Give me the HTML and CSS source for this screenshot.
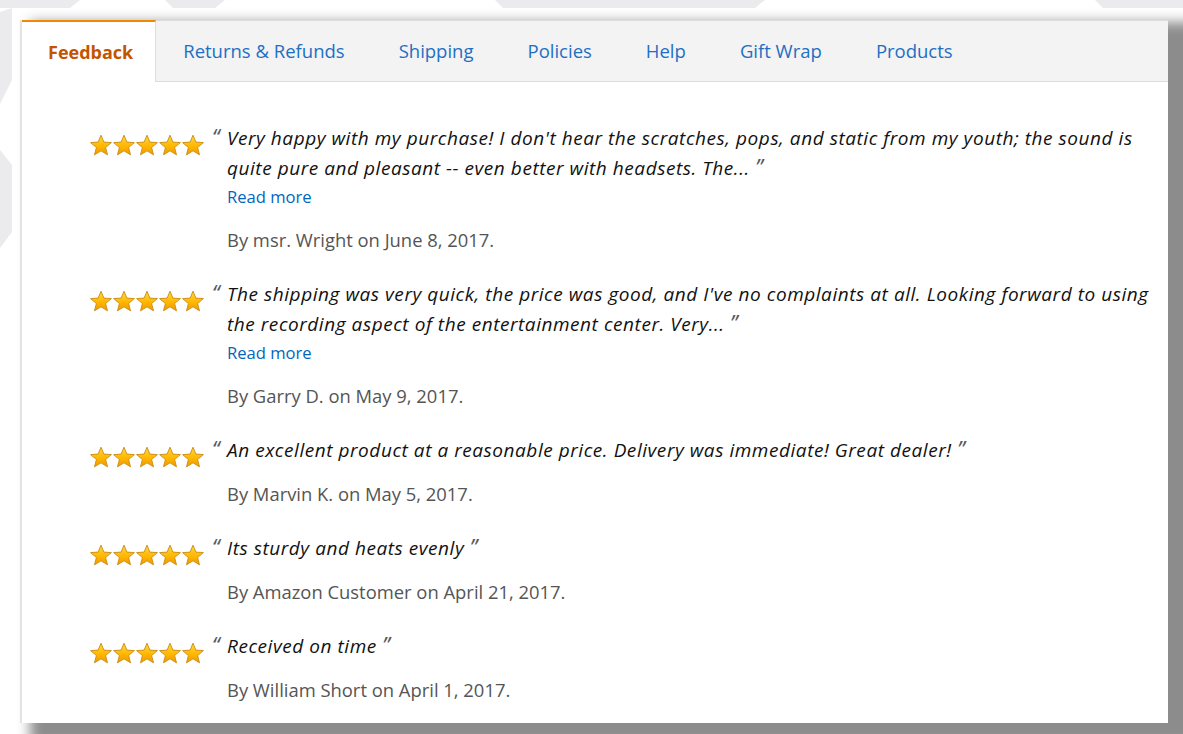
FILE: index.html
```html
<!DOCTYPE html>
<html lang="en">
<head>
<meta charset="utf-8">
<title>Feedback</title>
<link rel="stylesheet" href="styles.css">
</head>
<body>
<svg class="watermark" width="1183" height="734" viewBox="0 0 1183 734" aria-hidden="true">
  <polygon points="0,0 80,0 70,8 0,8"/>
  <polygon points="165,0 225,0 215,8 173,8"/>
  <polygon points="495,0 765,0 755,8 503,8"/>
  <polygon points="1095,0 1183,0 1183,8 1103,8"/>
  <polygon points="0,12 12,8 12,80 0,104"/>
  <polygon points="0,150 12,165 12,232 0,248"/>
</svg>
<svg width="0" height="0" class="defs" aria-hidden="true">
  <defs>
    <linearGradient id="sg" x1="0" y1="0" x2="0" y2="1">
      <stop offset="0" stop-color="#ffd84a"/>
      <stop offset="0.55" stop-color="#ffb800"/>
      <stop offset="1" stop-color="#f09a00"/>
    </linearGradient>
    <path id="star" d="M12 1.2 L14.9 8.1 L22.4 8.6 L16.6 13.5 L18.5 20.8 L12 16.8 L5.5 20.8 L7.4 13.5 L1.6 8.6 L9.1 8.1 Z" fill="url(#sg)" stroke="#c98a10" stroke-width="0.9" stroke-linejoin="round"/>
  </defs>
</svg>
<div class="page">
  <div class="card">
    <nav class="tabs">
      <a class="tab active">Feedback</a>
      <a class="tab">Returns &amp; Refunds</a>
      <a class="tab">Shipping</a>
      <a class="tab">Policies</a>
      <a class="tab">Help</a>
      <a class="tab">Gift Wrap</a>
      <a class="tab">Products</a>
    </nav>
    <div class="reviews">
      <div class="review">
        <svg class="stars" width="115" height="22" viewBox="0 0 115 22"><use href="#star" x="0"/><use href="#star" x="23"/><use href="#star" x="46"/><use href="#star" x="69"/><use href="#star" x="92"/></svg>
        <div class="body">
          <p class="quote"><span class="q open">&ldquo;</span>Very happy with my purchase! I don't hear the scratches, pops, and static from my youth; the sound is<br>quite pure and pleasant -- even better with headsets. The... <span class="q">&rdquo;</span></p>
          <a class="more">Read more</a>
          <p class="by">By msr. Wright on June 8, 2017.</p>
        </div>
      </div>
      <div class="review">
        <svg class="stars" width="115" height="22" viewBox="0 0 115 22"><use href="#star" x="0"/><use href="#star" x="23"/><use href="#star" x="46"/><use href="#star" x="69"/><use href="#star" x="92"/></svg>
        <div class="body">
          <p class="quote"><span class="q open">&ldquo;</span>The shipping was very quick, the price was good, and I've no complaints at all. Looking forward to using<br>the recording aspect of the entertainment center. Very... <span class="q">&rdquo;</span></p>
          <a class="more">Read more</a>
          <p class="by">By Garry D. on May 9, 2017.</p>
        </div>
      </div>
      <div class="review">
        <svg class="stars" width="115" height="22" viewBox="0 0 115 22"><use href="#star" x="0"/><use href="#star" x="23"/><use href="#star" x="46"/><use href="#star" x="69"/><use href="#star" x="92"/></svg>
        <div class="body">
          <p class="quote"><span class="q open">&ldquo;</span>An excellent product at a reasonable price. Delivery was immediate! Great dealer! <span class="q">&rdquo;</span></p>
          <p class="by">By Marvin K. on May 5, 2017.</p>
        </div>
      </div>
      <div class="review">
        <svg class="stars" width="115" height="22" viewBox="0 0 115 22"><use href="#star" x="0"/><use href="#star" x="23"/><use href="#star" x="46"/><use href="#star" x="69"/><use href="#star" x="92"/></svg>
        <div class="body">
          <p class="quote"><span class="q open">&ldquo;</span>Its sturdy and heats evenly <span class="q">&rdquo;</span></p>
          <p class="by">By Amazon Customer on April 21, 2017.</p>
        </div>
      </div>
      <div class="review">
        <svg class="stars" width="115" height="22" viewBox="0 0 115 22"><use href="#star" x="0"/><use href="#star" x="23"/><use href="#star" x="46"/><use href="#star" x="69"/><use href="#star" x="92"/></svg>
        <div class="body">
          <p class="quote"><span class="q open">&ldquo;</span>Received on time <span class="q">&rdquo;</span></p>
          <p class="by">By William Short on April 1, 2017.</p>
        </div>
      </div>
    </div>
  </div>
</div>
</body>
</html>
```

FILE: styles.css
```css
* { box-sizing: border-box; }
html, body {
  margin: 0;
  padding: 0;
  background: #ffffff;
  overflow: hidden;
  width: 1183px;
  height: 734px;
}
body {
  position: relative;
  font-family: "Open Sans", "Noto Sans", sans-serif;
}
.watermark {
  position: absolute;
  left: 0;
  top: 0;
  fill: #ebebed;
}
.defs { position: absolute; }
.page {
  position: relative;
  padding: 20px 15px 0 20px;
}
.card {
  width: 1148px;
  height: 703px;
  background: #ffffff;
  border-left: 2px solid #e3e3e3;
  box-shadow: 20px 12px 12px 10px rgba(0, 0, 0, 0.45);
}
.tabs {
  display: flex;
  height: 62px;
  background: #f3f3f3;
  border-top: 1px solid #dcdcdc;
  border-bottom: 1px solid #dcdcdc;
}
.tab {
  display: block;
  padding: 0 27px;
  line-height: 60px;
  font-size: 18.5px;
  color: #1e6fc4;
  white-space: nowrap;
}
.tab.active {
  background: #ffffff;
  color: #c45500;
  font-weight: 700;
  font-size: 18px;
  padding: 0 22px 0 26px;
  margin-top: -1px;
  margin-bottom: -1px;
  height: 62px;
  line-height: 61px;
  border-top: 2px solid #f08804;
  border-right: 1px solid #dcdcdc;
}
.reviews {
  padding: 41px 0 0 67px;
}
.review {
  display: flex;
  margin-bottom: 27px;
}
.stars {
  flex: none;
  margin-top: 11px;
  width: 115px;
  height: 22px;
}
.body {
  margin-left: 23px;
}
.quote {
  margin: 0;
  font-style: italic;
  font-size: 19px;
  letter-spacing: 0.55px;
  line-height: 30px;
  color: #111111;
  text-indent: -15px;
  white-space: nowrap;
}
.q {
  font-family: "Noto Sans", sans-serif;
  color: #5a5a5a;
  font-size: 21px;
  line-height: 1;
  letter-spacing: 0;
}
.q.open {
  display: inline-block;
  width: 15px;
  text-indent: 0;
}
.more {
  display: block;
  font-size: 16.6px;
  line-height: 28px;
  color: #0066c0;
}
.by {
  margin: 17px 0 0 0;
  font-size: 18.4px;
  line-height: 24px;
  color: #555555;
}
```
